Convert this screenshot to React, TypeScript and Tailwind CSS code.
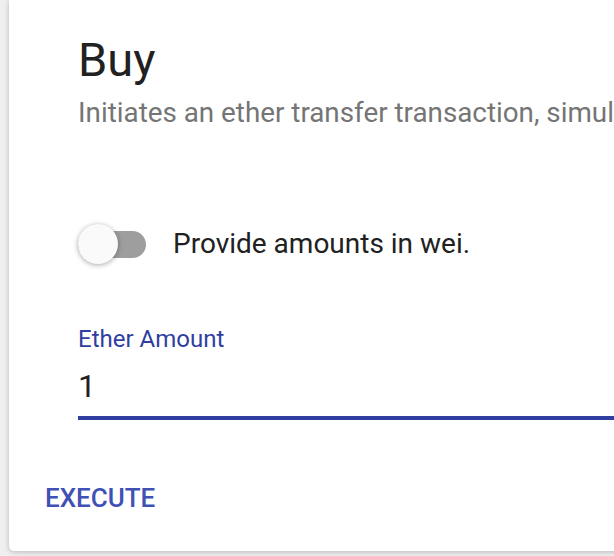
import React from "react";

export default function App() {
  return (
    <div className="w-[614px] h-[556px] overflow-hidden bg-[#efefef]" style={{ fontFamily: "Roboto, 'Noto Sans', sans-serif" }}>
      <div className="ml-[9px] w-[700px] bg-white rounded-b-[5px] shadow-[0_1px_6px_rgba(0,0,0,0.12),0_1px_4px_rgba(0,0,0,0.12)] pt-[32px] pb-[38px]">
        <div className="pl-[69px]">
          <div className="text-[47px] leading-[56px] text-[#212121] whitespace-nowrap">Buy</div>
          <div className="mt-[9px] text-[27.8px] leading-[32px] text-[#757575] whitespace-nowrap">
            Initiates an ether transfer transaction, simulating a purchase.
          </div>
          <div className="mt-[95px] flex items-center h-[40px]">
            <div className="relative w-[68px] h-[40px] flex items-center">
              <div className="w-[68px] h-[27px] rounded-full bg-[#9e9e9e]" />
              <div className="absolute left-0 top-0 w-[40px] h-[40px] rounded-full bg-[#fafafa] shadow-[0_1px_6px_rgba(0,0,0,0.16),0_1px_4px_rgba(0,0,0,0.2)]" />
            </div>
            <div className="ml-[27px] text-[28px] leading-[40px] text-[#212121] whitespace-nowrap">Provide amounts in wei.</div>
          </div>
          <div className="mt-[61px] text-[24px] leading-[28px] text-[#303f9f] whitespace-nowrap">Ether Amount</div>
          <div className="mt-[13px] text-[32px] leading-[40px] text-[#212121]">1</div>
          <div className="mt-[10px] h-[4px] bg-[#303f9f]" />
        </div>
        <div className="mt-[63px] pl-[36px] text-[26px] leading-[30px] font-medium text-[#3f51b5] whitespace-nowrap">EXECUTE</div>
      </div>
    </div>
  );
}
